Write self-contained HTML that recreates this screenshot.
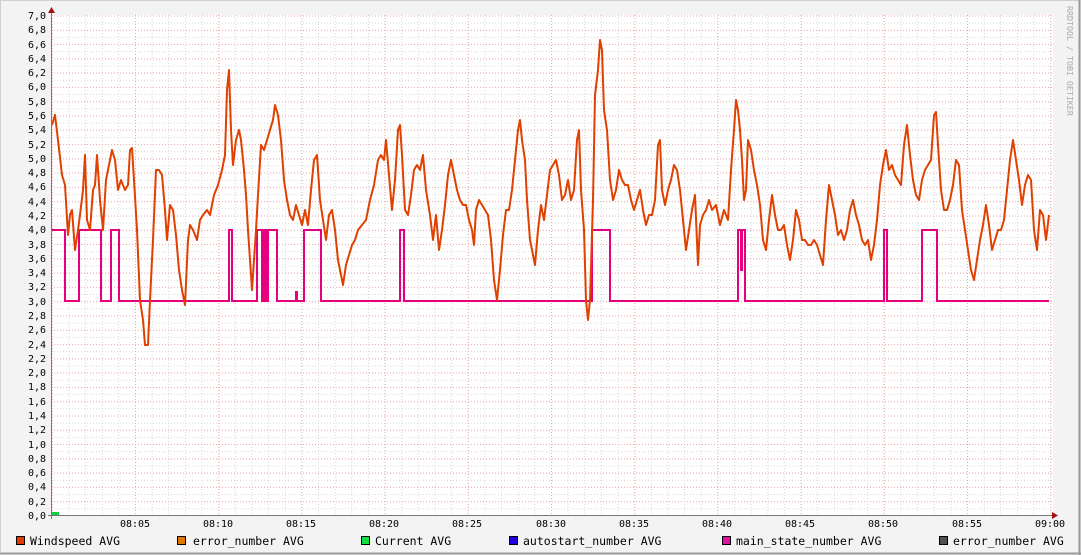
<!DOCTYPE html>
<html><head><meta charset="utf-8"><style>
html,body{margin:0;padding:0;background:#f3f3f3}
svg{display:block}
text{font-family:"DejaVu Sans Mono","Liberation Mono",monospace;font-size:10px;fill:#000}
.lg{font-size:11.5px}
</style></head><body>
<svg width="1081" height="555" viewBox="0 0 1081 555" xmlns="http://www.w3.org/2000/svg">
<defs>
<pattern id="hmin" x="0" y="15.5" width="1000" height="7.1429" patternUnits="userSpaceOnUse">
<line x1="0" y1="0.5" x2="1000" y2="0.5" stroke="#d8d8d8" stroke-dasharray="1,2"/></pattern>
<pattern id="hmaj" x="0" y="15.5" width="1000" height="14.2857" patternUnits="userSpaceOnUse">
<line x1="0" y1="0.5" x2="1000" y2="0.5" stroke="#eea8a8" stroke-dasharray="1,2"/></pattern>
<pattern id="vmin" x="51.8" y="0" width="16.64" height="600" patternUnits="userSpaceOnUse">
<line x1="0.5" y1="0" x2="0.5" y2="600" stroke="#d8d8d8" stroke-dasharray="1,2"/></pattern>
<pattern id="vmaj" x="51.8" y="0" width="83.2" height="600" patternUnits="userSpaceOnUse">
<line x1="0.5" y1="0" x2="0.5" y2="600" stroke="#eea8a8" stroke-dasharray="1,2"/></pattern>
</defs>
<rect x="0" y="0" width="1081" height="555" fill="#f3f3f3"/>
<rect x="0.5" y="0.5" width="1079" height="553" fill="none" stroke="#d0d0d0"/>
<line x1="0" y1="553.5" x2="1081" y2="553.5" stroke="#9a9a9a" stroke-width="2"/>
<line x1="1079.5" y1="0" x2="1079.5" y2="555" stroke="#9a9a9a" stroke-width="2"/>
<rect x="51" y="15" width="1002" height="501" fill="#fff"/>
<rect x="51" y="15" width="1002" height="501" fill="url(#hmin)"/>
<rect x="51" y="15" width="1002" height="501" fill="url(#vmin)"/>
<rect x="51" y="15" width="1002" height="501" fill="url(#hmaj)"/>
<rect x="51" y="15" width="1002" height="501" fill="url(#vmaj)"/>
<g text-anchor="end">
<text x="46" y="19">7,0</text><text x="46" y="33">6,8</text><text x="46" y="48">6,6</text><text x="46" y="62">6,4</text><text x="46" y="76">6,2</text><text x="46" y="90">6,0</text><text x="46" y="105">5,8</text><text x="46" y="119">5,6</text><text x="46" y="133">5,4</text><text x="46" y="148">5,2</text><text x="46" y="162">5,0</text><text x="46" y="176">4,8</text><text x="46" y="190">4,6</text><text x="46" y="205">4,4</text><text x="46" y="219">4,2</text><text x="46" y="233">4,0</text><text x="46" y="248">3,8</text><text x="46" y="262">3,6</text><text x="46" y="276">3,4</text><text x="46" y="290">3,2</text><text x="46" y="305">3,0</text><text x="46" y="319">2,8</text><text x="46" y="333">2,6</text><text x="46" y="348">2,4</text><text x="46" y="362">2,2</text><text x="46" y="376">2,0</text><text x="46" y="390">1,8</text><text x="46" y="405">1,6</text><text x="46" y="419">1,4</text><text x="46" y="433">1,2</text><text x="46" y="448">1,0</text><text x="46" y="462">0,8</text><text x="46" y="476">0,6</text><text x="46" y="490">0,4</text><text x="46" y="505">0,2</text><text x="46" y="519">0,0</text>
</g>
<g text-anchor="middle">
<text x="135" y="527">08:05</text><text x="218" y="527">08:10</text><text x="301" y="527">08:15</text><text x="384" y="527">08:20</text><text x="467" y="527">08:25</text><text x="551" y="527">08:30</text><text x="634" y="527">08:35</text><text x="717" y="527">08:40</text><text x="800" y="527">08:45</text><text x="883" y="527">08:50</text><text x="967" y="527">08:55</text><text x="1050" y="527">09:00</text>
</g>
<text x="1067" y="6" transform="rotate(90 1067 6)" style="fill:#aaa;font-size:8.3px">RRDTOOL / TOBI OETIKER</text>
<rect x="52" y="512" width="7" height="4" fill="#10d040"/>
<polyline fill="none" stroke="#e4007f" stroke-width="2" points="52,230 65,230 65,301 79,301 79,230 101,230 101,301 111,301 111,230 119,230 119,301 229,301 229,230 232,230 232,301 257,301 257,230 262,230 262,301 264,301 264,230 266,230 266,301 268,301 268,230 277,230 277,301 296,301 296,292 297,292 297,301 304,301 304,230 321,230 321,301 400,301 400,230 404,230 404,301 592,301 592,230 610,230 610,301 738,301 738,230 741,230 741,270 742,270 742,230 745,230 745,301 884,301 884,230 887,230 887,301 922,301 922,230 937,230 937,301 1049,301"/>
<polyline fill="none" stroke="#e04000" stroke-width="2" stroke-linejoin="round" points="52,125 55,115 58,140 62,175 65,185 68,235 70,215 72,210 75,250 78,230 80,215 83,190 85,155 87,220 90,230 93,190 95,185 97,155 100,200 103,230 106,180 108,170 112,150 115,160 118,190 121,180 125,190 128,185 130,150 132,148 134,180 137,230 140,300 143,320 145,345 148,345 150,300 153,240 156,170 159,170 162,175 165,210 167,240 170,205 173,210 176,235 179,270 182,290 185,305 188,240 190,225 193,230 197,240 200,220 203,215 207,210 210,215 214,195 218,185 222,170 225,155 227,90 229,70 231,130 233,165 236,140 239,130 241,140 244,170 246,195 248,230 250,260 252,290 254,260 256,230 258,195 261,145 264,150 267,140 270,130 273,120 275,105 278,115 281,140 284,180 287,200 290,215 293,220 296,205 299,215 302,225 305,210 308,225 311,190 314,160 317,155 320,200 323,220 326,240 329,215 332,210 335,230 338,260 341,275 343,285 346,265 349,255 352,245 355,240 358,230 362,225 366,220 370,200 374,185 378,160 381,155 384,160 386,140 389,175 392,210 395,180 398,130 400,125 402,155 405,210 408,215 411,195 414,170 417,165 420,170 423,155 426,190 430,215 433,240 436,215 439,250 442,230 445,205 448,175 451,160 454,175 457,190 460,200 463,205 466,205 469,220 472,230 474,245 476,210 479,200 482,205 485,210 488,215 491,240 494,280 497,300 500,270 503,235 506,210 509,210 512,190 515,160 518,130 520,120 522,140 525,160 527,200 530,240 533,255 535,265 538,230 541,205 544,220 547,195 550,170 553,165 556,160 559,175 562,200 565,195 568,180 571,200 574,190 577,140 579,130 581,190 584,230 586,300 588,320 590,300 593,200 595,95 598,70 600,40 602,50 604,110 607,130 610,180 613,200 616,190 619,170 622,180 625,185 628,185 631,200 634,210 637,200 640,190 643,210 646,225 649,215 652,215 655,200 658,145 660,140 662,190 665,205 668,190 671,180 674,165 677,170 680,190 683,220 686,250 689,230 692,210 695,195 698,265 700,225 703,215 706,210 709,200 712,210 716,205 720,225 724,210 728,220 731,170 734,130 736,100 738,110 740,130 742,160 744,200 746,190 748,140 751,150 754,170 757,185 760,205 763,240 766,250 769,220 772,195 775,215 778,230 781,230 784,225 787,245 790,260 793,240 796,210 799,220 802,240 805,240 808,245 811,245 814,240 817,245 820,255 823,265 826,220 829,185 832,200 835,215 838,235 841,230 844,240 847,230 850,210 853,200 856,215 859,225 862,240 865,245 868,240 871,260 874,245 877,220 880,185 883,165 886,150 889,170 892,165 895,175 898,180 901,185 904,145 907,125 910,155 913,180 916,195 919,200 922,180 925,170 928,165 931,160 934,115 936,112 938,145 941,190 944,210 947,210 950,200 953,185 956,160 959,165 962,210 965,230 968,250 971,270 974,280 977,260 980,240 983,225 986,205 989,225 992,250 995,240 998,230 1001,230 1004,220 1007,190 1010,160 1013,140 1016,160 1019,180 1022,205 1025,185 1028,175 1031,180 1034,230 1037,250 1040,210 1043,215 1046,240 1049,215"/>
<line x1="51.5" y1="10" x2="51.5" y2="519" stroke="#777"/>
<line x1="48" y1="515.5" x2="1055" y2="515.5" stroke="#777"/>
<polygon points="48,13 51.5,7 55,13" fill="#a01010"/>
<polygon points="1052,512 1058,515.5 1052,519" fill="#a01010"/>
<g stroke="#000" stroke-width="1">
<rect x="16.5" y="536.5" width="8" height="8" fill="#e03a00"/>
<rect x="177.5" y="536.5" width="8" height="8" fill="#e07800"/>
<rect x="361.5" y="536.5" width="8" height="8" fill="#10e040"/>
<rect x="509.5" y="536.5" width="8" height="8" fill="#2000e0"/>
<rect x="722.5" y="536.5" width="8" height="8" fill="#e010a0"/>
<rect x="939.5" y="536.5" width="8" height="8" fill="#505050"/>
</g>
<text class="lg" x="30" y="545">Windspeed AVG</text>
<text class="lg" x="193" y="545">error_number AVG</text>
<text class="lg" x="375" y="545">Current AVG</text>
<text class="lg" x="523" y="545">autostart_number AVG</text>
<text class="lg" x="736" y="545">main_state_number AVG</text>
<text class="lg" x="953" y="545">error_number AVG</text>
</svg>
</body></html>
